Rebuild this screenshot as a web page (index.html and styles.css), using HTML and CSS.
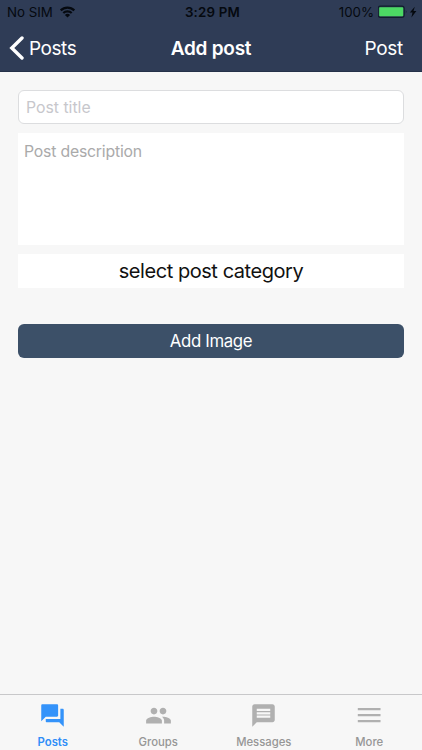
FILE: index.html
```html
<!DOCTYPE html>
<html lang="en">
<head>
<meta charset="utf-8">
<title>Add post</title>
<link rel="stylesheet" href="styles.css">
</head>
<body>
<div class="screen">
  <header class="header">
    <div class="status">
      <div class="status-left">
        <span class="carrier">No SIM</span>
        <svg class="wifi" viewBox="0 0 16 12"><path d="M1.2 4.4a9.6 9.6 0 0 1 13.6 0M3.8 7a6 6 0 0 1 8.4 0" fill="none" stroke="currentColor" stroke-width="2.2"/><path d="M8 11.6L5.4 9a3.7 3.7 0 0 1 5.2 0z" fill="currentColor"/></svg>
      </div>
      <span class="time">3:29 PM</span>
      <div class="status-right">
        <span class="percent">100%</span>
        <svg class="battery" viewBox="0 0 40 14"><rect x=".2" y="1.1" width="26" height="11.3" rx="2.4" fill="none" stroke="#111e2d" stroke-width="1.1"/><rect x="1.2" y="2.3" width="24" height="8.9" rx=".8" fill="#4cd964"/><path d="M27.8 5q1.6 1.8 0 3.6z" fill="#111e2d"/><path d="M36.8 1.8L31.8 7.5h2.7l-1.1 4.9 5-6.3h-2.9z" fill="#05090f"/></svg>
      </div>
    </div>
    <nav class="navbar">
      <a class="back"><svg class="chevron" viewBox="0 0 16 24"><path d="M13 2L2.8 12 13 22" fill="none" stroke="#fff" stroke-width="3.4" stroke-linecap="round" stroke-linejoin="miter"/></svg><span>Posts</span></a>
      <h1 class="title">Add post</h1>
      <a class="submit">Post</a>
    </nav>
  </header>
  <main class="form">
    <div class="field"><span>Post title</span></div>
    <div class="description"><span>Post description</span></div>
    <div class="category"><span>select post category</span></div>
    <div class="add-image"><span>Add Image</span></div>
  </main>
  <footer class="tabs">
    <a class="tab active"><svg viewBox="0 0 24 24"><path d="M21 6h-2v9H6v2c0 .55.45 1 1 1h11l4 4V7c0-.55-.45-1-1-1zm-4 6V3c0-.55-.45-1-1-1H3c-.55 0-1 .45-1 1v14l4-4h10c.55 0 1-.45 1-1z"/></svg><span>Posts</span></a>
    <a class="tab"><svg viewBox="0 0 24 24"><path d="M16 11c1.66 0 2.99-1.34 2.99-3S17.66 5 16 5s-3 1.34-3 3 1.34 3 3 3zm-8 0c1.66 0 2.99-1.34 2.99-3S9.66 5 8 5 5 6.34 5 8s1.34 3 3 3zm0 2c-2.33 0-7 1.17-7 3.5V19h14v-2.5c0-2.33-4.67-3.5-7-3.5zm8 0c-.29 0-.62.02-.97.05 1.16.84 1.97 1.97 1.97 3.45V19h6v-2.5c0-2.33-4.67-3.5-7-3.5z"/></svg><span>Groups</span></a>
    <a class="tab"><svg viewBox="0 0 24 24"><path d="M20 2H4c-1.1 0-1.99.9-1.99 2L2 22l4-4h14c1.1 0 2-.9 2-2V4c0-1.1-.9-2-2-2zM6 6h12v2H6zm0 3h12v2H6zm0 3h12v2H6z"/></svg><span>Messages</span></a>
    <a class="tab"><svg viewBox="0 0 24 24"><path d="M1.6 5.4h20.2v1.9H1.6zm0 5.3h20.2v1.9H1.6zm0 5.3h20.2v1.9H1.6z"/></svg><span>More</span></a>
  </footer>
</div>
</body>
</html>
```
FILE: styles.css
```css
* { box-sizing: border-box; }
body { margin: 0; font-family: Inter, "Liberation Sans", sans-serif; }
.screen { width: 422px; height: 750px; display: flex; flex-direction: column; background: #f7f7f7; overflow: hidden; }
span, h1, a { white-space: nowrap; }
.header { height: 72px; background: #2f3c56; border-bottom: 1px solid #253149; }
.status { height: 24px; display: grid; grid-template-columns: 1fr auto 1fr; align-items: center; padding: 0 4px 0 7px; color: #05090f; font-size: 13.3px; line-height: 24px; }
.status-left, .status-right { display: flex; align-items: center; }
.status-left { gap: 6px; }
.status-right { justify-content: flex-end; gap: 4px; }
.wifi { width: 17px; height: 12px; }
.battery { width: 40px; height: 14px; }
.time { font-weight: 600; letter-spacing: .2px; }
.navbar { height: 47px; display: grid; grid-template-columns: 1fr auto 1fr; align-items: center; padding: 1px 19px 0 9px; color: #fff; font-size: 19px; line-height: 47px; }
.back { display: flex; align-items: center; gap: 4px; letter-spacing: -.45px; }
.chevron { width: 16px; height: 24px; margin-top: -1px; }
.title { margin: 0 0 0 10px; font-size: 19px; font-weight: 600; letter-spacing: -.25px; }
.submit { text-align: right; letter-spacing: -.3px; }
.form { flex: 1; padding: 18px 18px 0; display: flex; flex-direction: column; }
.form > div { width: 386px; }
.field { height: 34px; border: 1px solid #dcdddf; border-radius: 6px; background: #fff; padding: 1px 0 0 7px; color: #c7c7cc; font-size: 15.8px; line-height: 32px; }
.description { height: 112px; margin-top: 9px; background: #fff; padding: 8px 6px; color: #aaa; font-size: 15.8px; letter-spacing: -.2px; line-height: 22px; }
.category { height: 34px; margin-top: 9px; background: #fff; color: #111; text-align: center; font-size: 20px; letter-spacing: -.45px; line-height: 34px; }
.add-image { height: 34px; margin-top: 36px; border-radius: 6px; background: #3c5068; color: #fff; text-align: center; font-size: 16.8px; letter-spacing: -.35px; line-height: 34px; }
.tabs { height: 56px; border-top: 1px solid #c8c8ca; display: grid; grid-template-columns: repeat(4, 1fr); }
.tab { display: flex; flex-direction: column; align-items: center; padding-top: 7px; color: #969696; font-size: 11.3px; font-weight: 500; line-height: 14px; }
.tab svg { width: 27px; height: 27px; fill: #b0b0b0; margin-bottom: 6px; }
.active { color: #2f8df7; font-weight: 600; }
.active svg { fill: #3493fa; }
```
